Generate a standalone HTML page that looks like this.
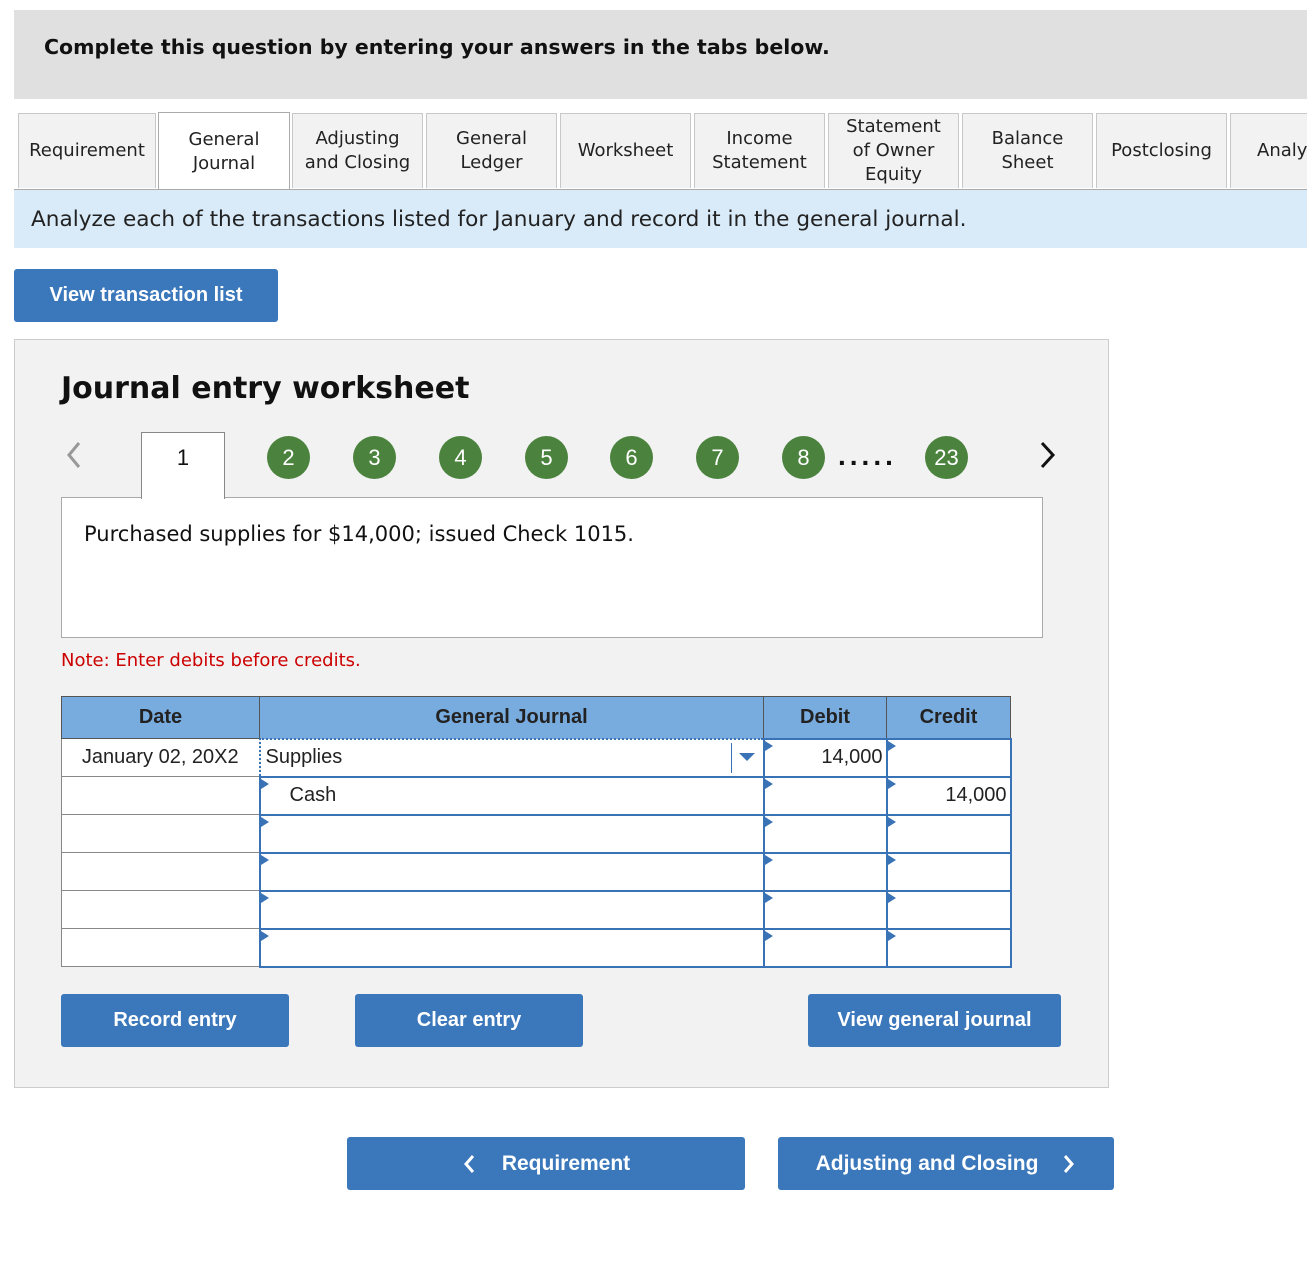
<!DOCTYPE html>
<html><head><meta charset="utf-8"><style>
*{box-sizing:border-box;margin:0;padding:0}
body{width:1307px;height:1276px;background:#fff;position:relative;overflow:hidden;font-family:"DejaVu Sans","Liberation Sans",sans-serif;color:#222}
.a{position:absolute}
.hdr{left:14px;top:10px;width:1293px;height:89px;background:#e0e0e0}
.hdr div{position:absolute;left:30px;top:25px;font-weight:bold;font-size:20.5px;color:#111;white-space:nowrap}
.tab{position:absolute;top:113px;height:75px;background:#f2f2f2;border:1px solid #c8c8c8;border-bottom:none;display:flex;align-items:center;justify-content:center;text-align:center;font-size:18px;line-height:24px;color:#222;white-space:nowrap;overflow:hidden}
.tab.act{background:#fff;top:112px;height:78px;border-color:#aaa}
.info{left:14px;top:189px;width:1293px;height:59px;background:#d9ebf9;border-top:1px solid #aaa}
.info div{position:absolute;left:17px;top:17px;font-size:21.6px;white-space:nowrap}
.btn{position:absolute;background:#3a77bb;color:#fff;font-family:"Liberation Sans",sans-serif;font-weight:bold;font-size:20px;display:flex;align-items:center;justify-content:center;border-radius:3px;white-space:nowrap}
.panel{left:14px;top:339px;width:1095px;height:749px;background:#f2f2f2;border:1px solid #ccc}
.circ{position:absolute;top:436px;width:43px;height:43px;border-radius:50%;background:#4b833e;color:#fff;font-family:"Liberation Sans",sans-serif;font-size:22px;display:flex;align-items:center;justify-content:center}
table{position:absolute;left:61px;top:696px;border-collapse:collapse;font-family:"Liberation Sans",sans-serif;font-size:20px}
th{background:#78acdf;height:42px;border:1px solid #555;font-weight:bold;color:#222}
td{height:38px;border:1px solid #888;background:#fff;position:relative;padding:0}
td.in{border:2px solid #3a72b6}
td.in::before{content:"";position:absolute;left:0;top:1px;border-left:8px solid #3a72b6;border-top:5px solid transparent;border-bottom:5px solid transparent}
</style></head><body>
<div class="a hdr"><div>Complete this question by entering your answers in the tabs below.</div></div>

<div class="tab" style="left:18px;width:138px">Requirement</div>
<div class="tab act" style="left:158px;width:132px">General<br>Journal</div>
<div class="tab" style="left:292px;width:131px">Adjusting<br>and Closing</div>
<div class="tab" style="left:426px;width:131px">General<br>Ledger</div>
<div class="tab" style="left:560px;width:131px">Worksheet</div>
<div class="tab" style="left:694px;width:131px">Income<br>Statement</div>
<div class="tab" style="left:828px;width:131px">Statement<br>of Owner<br>Equity</div>
<div class="tab" style="left:962px;width:131px">Balance<br>Sheet</div>
<div class="tab" style="left:1096px;width:131px">Postclosing</div>
<div class="tab" style="left:1230px;width:100px;justify-content:flex-start;padding-left:26px">Analy</div>

<div class="a info"><div>Analyze each of the transactions listed for January and record it in the general journal.</div></div>

<div class="btn" style="left:14px;top:269px;width:264px;height:53px">View transaction list</div>

<div class="a panel"></div>
<div class="a" style="left:61px;top:371px;font-weight:bold;font-size:30px;color:#111;white-space:nowrap">Journal entry worksheet</div>

<svg class="a" style="left:64px;top:440px" width="20" height="30"><path d="M15 3 L5 15 L15 27" stroke="#999" stroke-width="3" fill="none"/></svg>
<svg class="a" style="left:1038px;top:440px" width="20" height="30"><path d="M4 3 L15 15 L4 27" stroke="#111" stroke-width="3" fill="none"/></svg>
<div class="a" style="left:61px;top:497px;width:982px;height:141px;background:#fff;border:1px solid #aaa"></div>
<div class="a" style="left:141px;top:432px;width:84px;height:67px;background:#fff;border:1px solid #888;border-bottom:none;text-align:center;padding-top:12px;font-family:'Liberation Sans',sans-serif;font-size:22px;color:#111">1</div>
<div class="circ" style="left:267px">2</div>
<div class="circ" style="left:353px">3</div>
<div class="circ" style="left:439px">4</div>
<div class="circ" style="left:525px">5</div>
<div class="circ" style="left:610px">6</div>
<div class="circ" style="left:696px">7</div>
<div class="circ" style="left:782px">8</div>
<div class="a" style="left:838px;top:440px;font-family:'Liberation Sans',sans-serif;font-size:28px;font-weight:bold;letter-spacing:4px;color:#111">.....</div>
<div class="circ" style="left:925px">23</div>

<div class="a" style="left:84px;top:522px;font-size:21px;white-space:nowrap;color:#111">Purchased supplies for $14,000; issued Check 1015.</div>
<div class="a" style="left:61px;top:650px;font-size:18px;color:#c00;white-space:nowrap">Note: Enter debits before credits.</div>

<table>
<tr><th style="width:198px">Date</th><th style="width:504px">General Journal</th><th style="width:123px">Debit</th><th style="width:124px">Credit</th></tr>
<tr><td style="text-align:center">January 02, 20X2</td><td style="border:2px dotted #3a72b6;padding-left:5px">Supplies<span style="position:absolute;right:0;top:3px;width:32px;height:30px;border-left:1px solid #3a72b6"></span><span style="position:absolute;right:8px;top:13px;border-top:8px solid #3a72b6;border-left:8px solid transparent;border-right:8px solid transparent"></span></td><td class="in" style="text-align:right;padding-right:3px">14,000</td><td class="in"></td></tr>
<tr><td></td><td class="in" style="padding-left:29px">Cash</td><td class="in"></td><td class="in" style="text-align:right;padding-right:3px">14,000</td></tr>
<tr><td></td><td class="in"></td><td class="in"></td><td class="in"></td></tr>
<tr><td></td><td class="in"></td><td class="in"></td><td class="in"></td></tr>
<tr><td></td><td class="in"></td><td class="in"></td><td class="in"></td></tr>
<tr><td></td><td class="in"></td><td class="in"></td><td class="in"></td></tr>
</table>

<div class="btn" style="left:61px;top:994px;width:228px;height:53px">Record entry</div>
<div class="btn" style="left:355px;top:994px;width:228px;height:53px">Clear entry</div>
<div class="btn" style="left:808px;top:994px;width:253px;height:53px">View general journal</div>

<div class="btn" style="left:347px;top:1137px;width:398px;height:53px;font-size:21px"><svg width="14" height="22" style="margin-right:26px"><path d="M11 3 L4 11 L11 19" stroke="#fff" stroke-width="3" fill="none"/></svg>Requirement</div>
<div class="btn" style="left:778px;top:1137px;width:336px;height:53px;font-size:21px">Adjusting and Closing<svg width="14" height="22" style="margin-left:24px"><path d="M3 3 L10 11 L3 19" stroke="#fff" stroke-width="3" fill="none"/></svg></div>
</body></html>
